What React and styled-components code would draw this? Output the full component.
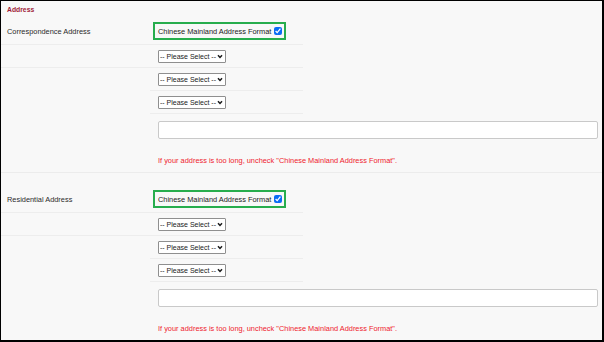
import React from "react";
import styled, { createGlobalStyle } from "styled-components";

const GlobalStyle = createGlobalStyle`
  html, body {
    margin: 0;
    padding: 0;
    background: #fff;
  }
  body {
    font-family: "Liberation Sans", Arial, sans-serif;
  }
`;

const Page = styled.div`
  width: 604px;
  height: 342px;
  box-sizing: border-box;
  border: 1px solid #000;
  border-right-width: 2px;
  border-bottom-width: 2px;
  background: #f8f8f8;
  overflow: hidden;
  font-family: "Liberation Sans", Arial, sans-serif;
  font-size: 7.4px;
  color: #2a2a2a;
`;

const Title = styled.div`
  height: 17px;
  display: flex;
  align-items: center;
  padding-left: 6px;
  font-size: 6.8px;
  font-weight: bold;
  color: #a01b38;
`;

const Section = styled.section`
  border-top: ${(p) => (p.$divided ? "1px solid #ececec" : "none")};
  padding-top: ${(p) => (p.$divided ? "13px" : "0")};
`;

const Row = styled.div`
  display: flex;
  height: ${(p) => p.$h}px;
`;

const LabelCell = styled.div`
  width: 149px;
  box-sizing: border-box;
  padding-left: 6px;
  display: flex;
  align-items: center;
  border-bottom: 1px solid ${(p) => (p.$line ? "#ededed" : "transparent")};
`;

const ValueCell = styled.div`
  width: 153px;
  box-sizing: border-box;
  padding-left: ${(p) => p.$pad}px;
  display: flex;
  align-items: center;
  border-bottom: 1px solid #ededed;
`;

const FormatBox = styled.label`
  display: inline-flex;
  align-items: center;
  gap: 3px;
  height: 18px;
  box-sizing: border-box;
  padding: 0 2px 0 3px;
  border: 2px solid #27ad4d;
  color: #1a1a1a;
`;

const Check = styled.input`
  width: 8px;
  height: 8px;
  margin: 0;
  accent-color: #0a6cf5;
`;

const SelectWrap = styled.div`
  position: relative;
  display: inline-flex;
`;

const Select = styled.select`
  appearance: none;
  width: 68px;
  height: 13px;
  box-sizing: border-box;
  margin: 0;
  padding: 0 7px 0 1px;
  border: 1px solid #8f8f8f;
  border-radius: 1px;
  background: #fff;
  font-family: "Liberation Sans", Arial, sans-serif;
  font-size: 7px;
  color: #1a1a1a;
`;

const Chevron = styled.svg`
  position: absolute;
  right: 3px;
  top: 4px;
  pointer-events: none;
`;

const InputRow = styled.div`
  height: 32px;
  box-sizing: border-box;
  padding: 7px 0 0 157px;
`;

const TextInput = styled.input`
  width: 440px;
  height: 18px;
  box-sizing: border-box;
  margin: 0;
  border: 1px solid #c9c9c9;
  border-radius: 2px;
  background: #fff;
`;

const Note = styled.div`
  height: 26px;
  box-sizing: border-box;
  padding: 10px 0 0 157px;
  line-height: 9px;
  color: #ef1b2d;
`;

const PleaseSelect = () => (
  <SelectWrap>
    <Select defaultValue="">
      <option value="">-- Please Select --</option>
    </Select>
    <Chevron width="6" height="5" viewBox="0 0 6 5">
      <path d="M1 1.2 L3 3.4 L5 1.2" fill="none" stroke="#1a1a1a" strokeWidth="1.5" />
    </Chevron>
  </SelectWrap>
);

const AddressBlock = ({ label, divided }) => (
  <Section $divided={divided}>
    <Row $h={27}>
      <LabelCell $line>{label}</LabelCell>
      <ValueCell $pad={3}>
        <FormatBox>
          Chinese Mainland Address Format
          <Check type="checkbox" defaultChecked />
        </FormatBox>
      </ValueCell>
    </Row>
    <Row $h={23}>
      <LabelCell $line />
      <ValueCell $pad={8}>
        <PleaseSelect />
      </ValueCell>
    </Row>
    <Row $h={23}>
      <LabelCell />
      <ValueCell $pad={8}>
        <PleaseSelect />
      </ValueCell>
    </Row>
    <Row $h={23}>
      <LabelCell />
      <ValueCell $pad={8}>
        <PleaseSelect />
      </ValueCell>
    </Row>
    <InputRow>
      <TextInput type="text" />
    </InputRow>
    <Note>
      If your address is too long, uncheck "Chinese Mainland Address Format".
    </Note>
  </Section>
);

export default function App() {
  return (
    <>
      <GlobalStyle />
      <Page>
        <Title>Address</Title>
        <AddressBlock label="Correspondence Address" />
        <AddressBlock label="Residential Address" divided />
      </Page>
    </>
  );
}
